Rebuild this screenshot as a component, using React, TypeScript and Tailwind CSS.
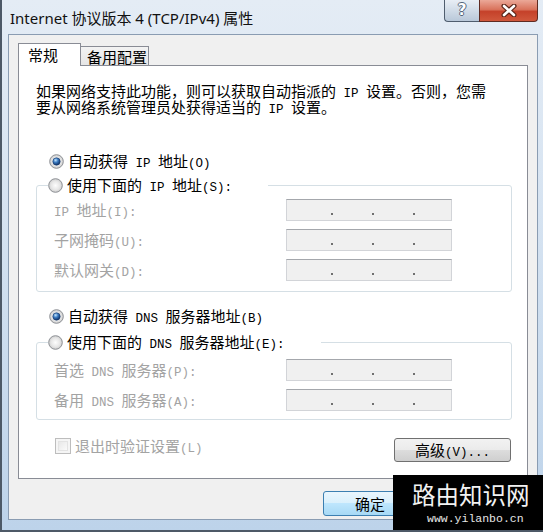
import React from "react";

// SimSun-like mix: ASCII runs get a half-width mono face, CJK stays full width
function T({ s }: { s: string }) {
  return (
    <>
      {s.split(/([\x20-\x7e]+)/).map((p, i) =>
        /[\x20-\x7e]/.test(p) ? (
          <span key={i} className="font-['Liberation_Mono',monospace] text-[12.5px] leading-[0px]">
            {p}
          </span>
        ) : (
          p
        )
      )}
    </>
  );
}

function Radio({ checked }: { checked?: boolean }) {
  return (
    <svg width="15" height="15" viewBox="0 0 15 15" className="shrink-0">
      <defs>
        <radialGradient id="rb" cx="50%" cy="50%" r="50%">
          <stop offset="0%" stopColor="#fdfdfd" />
          <stop offset="65%" stopColor="#e6e6e6" />
          <stop offset="100%" stopColor="#cdcdcd" />
        </radialGradient>
        <radialGradient id="rd" cx="38%" cy="32%" r="70%">
          <stop offset="0%" stopColor="#c4e6ff" />
          <stop offset="45%" stopColor="#3c7cc2" />
          <stop offset="100%" stopColor="#0c2c60" />
        </radialGradient>
      </defs>
      <circle cx="7.5" cy="7.5" r="6.8" fill="url(#rb)" stroke="#8d9095" />
      {checked && <circle cx="7.5" cy="7.5" r="3.7" fill="url(#rd)" stroke="#1a3d70" strokeWidth="0.6" />}
    </svg>
  );
}

function IpField() {
  return (
    <div className="w-[166px] h-[22px] border border-[#d2d4d8] border-t-[#a4a7ac] bg-[#f0f0f0] flex items-end pb-[5px] pl-[44px] gap-[39px]">
      {[0, 1, 2].map((i) => (
        <div key={i} className="w-[2px] h-[2px] bg-[#6f6f6f]" />
      ))}
    </div>
  );
}

function FieldRow({ label }: { label: string }) {
  return (
    <div className="flex items-center h-[22px]">
      <div className="w-[232px] text-[#a3a3a3] leading-[16px]">
        <T s={label} />
      </div>
      <IpField />
    </div>
  );
}

function Group({ legend, labels, pt, pb }: { legend: string; labels: string[]; pt: string; pb: string }) {
  return (
    <fieldset className="ml-[17px] w-[476px] border border-[#d5dfe5] rounded-[3px]">
      <legend className="ml-[11px] pr-[36px]">
        <div className="flex items-center gap-[4px] h-[20px] leading-[16px]">
          <Radio />
          <span>
            <T s={legend} />
          </span>
        </div>
      </legend>
      <div className={`flex flex-col gap-[8px] pl-[17px] ${pt} ${pb}`}>
        {labels.map((l) => (
          <FieldRow key={l} label={l} />
        ))}
      </div>
    </fieldset>
  );
}

export default function App() {
  return (
    <div className="w-[543px] h-[532px] relative overflow-hidden border-l-2 border-b-2 border-[#4d5967] bg-[linear-gradient(180deg,#e4ecf5_0%,#d6e3f1_40%,#bdd3ea_100%)] text-black font-['Noto_Sans_CJK_SC',sans-serif] text-[15px]">
      {/* Title bar */}
      <div className="h-[34px] flex items-start">
        <div className="pl-[8px] pt-[8px] leading-[20px] font-['Noto_Sans','Noto_Sans_CJK_SC',sans-serif] text-[15px] text-[#111]">
          Internet 协议版本 4 (TCP/IPv4) 属性
        </div>
        <div className="ml-auto mr-[5px] flex">
          <div className="w-[35px] h-[22px] border-l border-b border-[#4f5d6e] rounded-bl-[4px] bg-[linear-gradient(180deg,#e8eef5_0%,#d0dbe7_50%,#b9c8d9_100%)] flex items-center justify-center">
            <span className="font-['DejaVu_Sans',sans-serif] font-bold text-[15px] leading-none text-white [text-shadow:-1px_0_#55667a,1px_0_#55667a,0_-1px_#55667a,0_1px_#55667a]">
              ?
            </span>
          </div>
          <div className="w-[59px] h-[22px] border-l border-r border-b border-[#5e2b22] rounded-br-[4px] bg-[linear-gradient(180deg,#eba898_0%,#d9735c_45%,#c5412a_55%,#d0583c_100%)] flex items-center justify-center">
            <svg width="16" height="13" viewBox="0 0 16 13">
              <path d="M3 2 L13 11 M13 2 L3 11" stroke="#5a2418" strokeWidth="5" strokeLinecap="round" />
              <path d="M3 2 L13 11 M13 2 L3 11" stroke="#ffffff" strokeWidth="2.6" strokeLinecap="round" />
            </svg>
          </div>
        </div>
      </div>

      {/* Client area */}
      <div className="ml-[6px] w-[530px] h-[486px] border border-[#8a9cb2] bg-[#f0f0f0] pt-[8px]">
        {/* Tabs */}
        <div className="ml-[9px] flex items-start h-[23px] leading-[16px]">
          <div className="relative z-10 w-[63px] h-[23px] border-t border-l border-r border-[#898c95] bg-white pl-[9px] pt-[3px]">
            常规
          </div>
          <div className="mt-[3px] w-[68px] h-[19px] border-t border-r border-[#898c95] bg-[linear-gradient(180deg,#f3f3f3_0%,#e6e6e6_100%)] pl-[6px] pt-[2px]">
            备用配置
          </div>
        </div>

        {/* Panel */}
        <div className="ml-[9px] -mt-px w-[510px] h-[414px] border border-[#898c95] bg-white">
          <div className="pl-[17px] pt-[17px] leading-[16px]">
            <div>
              <T s="如果网络支持此功能，则可以获取自动指派的 IP 设置。否则，您需" />
            </div>
            <div>
              <T s="要从网络系统管理员处获得适当的 IP 设置。" />
            </div>
          </div>

          <div className="mt-[36px] pl-[30px] flex items-center gap-[4px] h-[20px] leading-[16px]">
            <Radio checked />
            <span>
              <T s="自动获得 IP 地址(O)" />
            </span>
          </div>

          <div className="mt-[4px]">
            <Group
              legend="使用下面的 IP 地址(S):"
              labels={["IP 地址(I):", "子网掩码(U):", "默认网关(D):"]}
              pt="pt-[4px]"
              pb="pb-[10px]"
            />
          </div>

          <div className="mt-[14px] pl-[30px] flex items-center gap-[4px] h-[20px] leading-[16px]">
            <Radio checked />
            <span>
              <T s="自动获得 DNS 服务器地址(B)" />
            </span>
          </div>

          <div className="mt-[6px]">
            <Group
              legend="使用下面的 DNS 服务器地址(E):"
              labels={["首选 DNS 服务器(P):", "备用 DNS 服务器(A):"]}
              pt="pt-[7px]"
              pb="pb-[8px]"
            />
          </div>

          <div className="mt-[18px] pl-[36px] pr-[16px] flex items-start justify-between">
            <div className="flex items-center gap-[4px] h-[16px] leading-[16px] text-[#a3a3a3]">
              <div className="w-[16px] h-[16px] border border-[#bdbdbd] bg-[#f5f5f5] p-[2px]">
                <div className="w-full h-full border border-[#e3e3e3] bg-[linear-gradient(135deg,#e8e8e8,#fafafa)]" />
              </div>
              <span>
                <T s="退出时验证设置(L)" />
              </span>
            </div>
            <button className="w-[117px] h-[24px] border border-[#707070] rounded-[3px] bg-[linear-gradient(180deg,#f2f2f2_0%,#ebebeb_49%,#dddddd_50%,#cfcfcf_100%)] leading-[16px]">
              <T s="高级(V)..." />
            </button>
          </div>
        </div>

        {/* Dialog buttons */}
        <div className="mt-[12px] pr-[18px] flex justify-end gap-[8px] leading-[16px]">
          <button className="w-[94px] h-[25px] border border-[#3c7fb1] rounded-[3px] bg-[linear-gradient(180deg,#eaf6fd_0%,#d9f0fc_49%,#bee6fd_50%,#a7d9f5_100%)]">
            确定
          </button>
          <button className="w-[94px] h-[25px] border border-[#707070] rounded-[3px] bg-[linear-gradient(180deg,#f2f2f2_0%,#ebebeb_49%,#dddddd_50%,#cfcfcf_100%)]">
            取消
          </button>
        </div>
      </div>

      {/* Watermark */}
      <div className="absolute right-0 bottom-0 w-[150px] h-[55px] bg-black text-white flex flex-col pt-[7px]">
        <div className="pl-[19px] text-[23.5px] leading-[24px] text-[#f2f2f2]">路由知识网</div>
        <div className="pl-[34px] mt-[7px] font-['Liberation_Mono',monospace] text-[11.5px] leading-[12px] text-[#e6e6e6]">
          www.yilanbo.cn
        </div>
      </div>
    </div>
  );
}
